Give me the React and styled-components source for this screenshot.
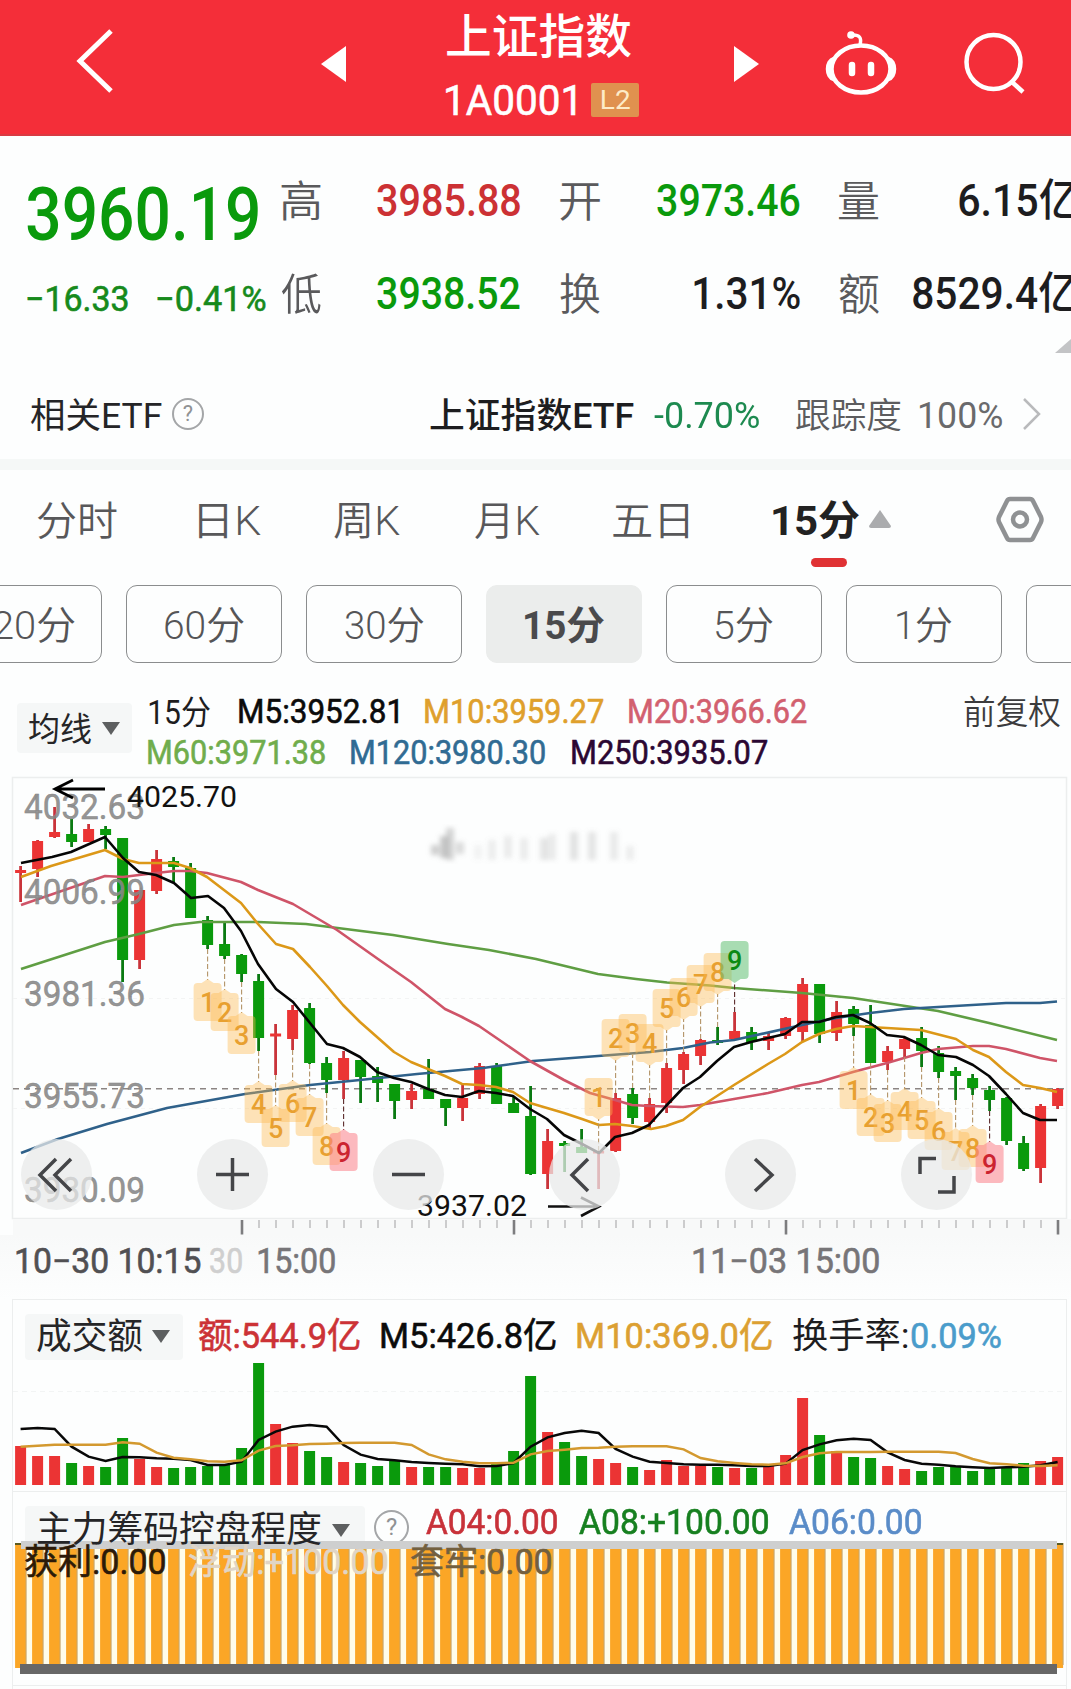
import React, { useLayoutEffect, useRef, useState } from 'react';
import styled, { createGlobalStyle } from 'styled-components';

const RED = '#eb3434';
const GREEN = '#0a9a0c';
const FONT = 'Roboto, "Noto Sans CJK SC", sans-serif';

const GlobalStyle = createGlobalStyle`
  body {
    margin: 0;
    background: #fdfefe;
    font-family: ${FONT};
  }
  * {
    box-sizing: border-box;
  }
`;

const Page = styled.div`
  width: 1071px;
  height: 1689px;
  overflow: hidden;
`;

// `heavy` sits between regular and medium, which Roboto has no cut for
const FitBox = styled.span`
  display: block;
  flex: none;
  width: ${p => p.$w}px;
  margin-left: ${p => p.$ml || 0}px;
  margin-top: ${p => p.$mt || 0}px;
  height: ${p => p.$size}px;
  line-height: ${p => p.$size}px;
  font-size: ${p => p.$size}px;
  font-weight: ${p => p.$weight || 400};
  color: ${p => p.$color || 'inherit'};
  -webkit-text-stroke: ${p => (p.$heavy ? 0.6 : 0)}px currentColor;
  white-space: nowrap;
`;

const FitInner = styled.span`
  display: inline-block;
  white-space: pre;
  transform-origin: 0 50%;
`;

// squeezes its text so that the drawn glyphs are exactly `w` wide
const Fit = ({ w, ml, mt, size, weight, heavy, color, children }) => {
  const ref = useRef(null);
  const [transform, setTransform] = useState('none');

  useLayoutEffect(() => {
    const ctx = document.createElement('canvas').getContext('2d');
    const cs = getComputedStyle(ref.current);
    ctx.font = `${cs.fontWeight} ${cs.fontSize} ${cs.fontFamily}`;
    const m = ctx.measureText(children);
    const scale = w / (m.actualBoundingBoxLeft + m.actualBoundingBoxRight);
    setTransform(
      `translateX(${m.actualBoundingBoxLeft * scale}px) scaleX(${scale})`
    );
  }, [children, w]);

  return (
    <FitBox
      $w={w}
      $ml={ml}
      $mt={mt}
      $size={size}
      $weight={weight}
      $heavy={heavy}
      $color={color}
    >
      <FitInner ref={ref} style={{ transform }}>
        {children}
      </FitInner>
    </FitBox>
  );
};

const Icon = styled.svg`
  display: block;
  flex: none;
  overflow: visible;
  margin-left: ${p => p.$ml || 0}px;
  margin-top: ${p => p.$mt || 0}px;
`;

/* ---------- header ---------- */

const Header = styled.header`
  display: flex;
  align-items: flex-start;
  height: 136px;
  background: #f42e39;
  border-bottom: 2px solid #d93a42;
  color: #fff;
`;

const TitleBlock = styled.div`
  width: 193px;
  margin-left: 100px;
`;

const CodeRow = styled.div`
  display: flex;
  align-items: center;
  height: 34px;
  margin-top: 23px;
`;

const Badge = styled.span`
  display: flex;
  align-items: center;
  width: 48px;
  height: 34px;
  margin-left: 16px;
  padding-left: 11px;
  border-radius: 2px;
  background: #e0914f;
`;

const TopBar = () => (
  <Header>
    <Icon $ml={77} $mt={30} width="36" height="62" fill="none" stroke="#fff" strokeWidth="5">
      <path d="M34 1 3 31 34 61" />
    </Icon>
    <Icon $ml={208} $mt={46} width="25" height="36">
      <path d="M25 0v36L0 18z" fill="#fff" />
    </Icon>
    <TitleBlock>
      <Fit w={184} size={47} mt={13} ml={1} weight={500}>上证指数</Fit>
      <CodeRow>
        <Fit w={129} size={42} mt={2} heavy>1A0001</Fit>
        <Badge>
          <Fit w={28} size={26} color="#fdebc8">L2</Fit>
        </Badge>
      </CodeRow>
    </TitleBlock>
    <Icon $ml={95} $mt={46} width="25" height="36">
      <path d="M0 0v36l25-18z" fill="#fff" />
    </Icon>
    <Icon $ml={67} $mt={30} width="70" height="64" fill="none" stroke="#fff" strokeWidth="4.500">
      <ellipse cx="35" cy="39" rx="29.500" ry="23.500" />
      <path d="M8 29C0 31 0 47 8 49M62 29c8 2 8 18 0 20" />
      <path d="M34 15c2-8-1-10-7-10" strokeWidth="3.500" />
      <circle cx="25" cy="5" r="3.800" fill="#fff" stroke="none" />
      <path d="M26 35v8M45 35v8" strokeWidth="6.500" strokeLinecap="round" />
    </Icon>
    <Icon $ml={69} $mt={33} width="60" height="60" fill="none" stroke="#fff" strokeWidth="4.500">
      <circle cx="28.500" cy="29" r="27" />
      <path d="m47 49 11 10" />
    </Icon>
  </Header>
);

/* ---------- quote ---------- */

const Quote = styled.section`
  display: flex;
  height: 217px;
`;

const PriceCol = styled.div`
  width: 281px;
  padding: 42px 0 0 27px;
`;

const Changes = styled.div`
  display: flex;
  margin-top: 30px;
`;

const Stats = styled.div`
  flex: 1;
  min-width: 0;
  display: grid;
  grid-template-columns: 279px 279px 240px;
  grid-template-rows: 93px 93px;
  padding-top: 18px;
`;

const Stat = styled.div`
  display: flex;
  align-items: center;
`;

const Corner = styled.div`
  align-self: flex-end;
  flex: none;
  width: 16px;
  height: 14px;
  margin-left: -16px;
  background: #c3c4c6;
  clip-path: polygon(100% 0, 100% 100%, 0 100%);
`;

const stats = [
  ['高', '3985.88', 55, 143, '#cc3134'],
  ['开', '3973.46', 56, 143, GREEN],
  ['量', '6.15亿', 79, 119, '#1d1d1f'],
  ['低', '3938.52', 55, 143, GREEN],
  ['换', '1.31%', 93, 106, '#1d1d1f'],
  ['额', '8529.4亿', 33, 164, '#1d1d1f'],
];

const QuotePanel = () => (
  <Quote>
    <PriceCol>
      <Fit w={231} size={74} weight={500} color={GREEN}>3960.19</Fit>
      <Changes>
        <Fit w={101} size={35} heavy color="#168a1c">−16.33</Fit>
        <Fit w={109} ml={29} size={35} heavy color="#168a1c">−0.41%</Fit>
      </Changes>
    </PriceCol>
    <Stats>
      {stats.map(([name, value, gap, w, color]) => (
        <Stat key={name}>
          <Fit w={40} mt={3} size={43} weight={350} color="#5a5a5c">{name}</Fit>
          <Fit w={w} ml={gap + 1} mt={1} size={44} weight={500} color={color}>{value}</Fit>
        </Stat>
      ))}
    </Stats>
    <Corner />
  </Quote>
);

/* ---------- related ETF ---------- */

const EtfRow = styled.section`
  display: flex;
  align-items: center;
  height: 117px;
  padding: 16px 0 0 31px;
  border-bottom: 11px solid #f5f8f7;
`;

const HelpMark = styled.span`
  display: flex;
  flex: none;
  align-items: center;
  justify-content: center;
  width: ${p => p.$d}px;
  height: ${p => p.$d}px;
  margin-left: ${p => p.$ml}px;
  margin-top: ${p => p.$mt || 0}px;
  border: 2px solid #a4a6a8;
  border-radius: 50%;
  color: #909294;
  font-size: ${p => p.$d * 0.68}px;
  line-height: 1;
`;

const Etf = () => (
  <EtfRow>
    <Fit w={131} mt={4} size={35} color="#252527">相关ETF</Fit>
    <HelpMark $d={32} $ml={10}>?</HelpMark>
    <Fit w={204} ml={226} mt={4} size={35} weight={500} color="#1d1d1f">上证指数ETF</Fit>
    <Fit w={105} ml={20} mt={4} size={36} color="#1d8a50">-0.70%</Fit>
    <Fit w={105} ml={37} mt={4} size={35} weight={350} color="#5c5c5e">跟踪度</Fit>
    <Fit w={82} ml={19} mt={4} size={36} color="#6a6a6c">100%</Fit>
    <Icon $ml={21} width="18" height="32" fill="none" stroke="#b9babc" strokeWidth="2.500">
      <path d="M1 1 16 16 1 31" />
    </Icon>
  </EtfRow>
);

/* ---------- period tabs ---------- */

const Tabs = styled.nav`
  display: flex;
  align-items: flex-start;
  height: 115px;
  padding-top: 31px;
  padding-left: 37px;
`;

const ActiveTab = styled.div`
  width: 86px;
  margin-left: 84px;
`;

const Underline = styled.div`
  width: 36px;
  height: 9px;
  margin: 16px 0 0 38px;
  border-radius: 5px;
  background: #e03234;
`;

const Periods = styled.div`
  display: flex;
  gap: 24px;
  height: 101px;
  margin-left: -54px;
`;

const Period = styled.div`
  display: flex;
  flex: none;
  align-items: center;
  justify-content: center;
  width: 156px;
  height: 78px;
  padding-top: 4px;
  border: 1.5px solid ${p => (p.$active ? '#ebedec' : '#8b8d8e')};
  border-radius: 11px;
  background: ${p => (p.$active ? '#ebedec' : 'transparent')};
`;

const periods = [
  ['120分', 102],
  ['60分', 79],
  ['30分', 79],
  ['15分', 79],
  ['5分', 57],
  ['1分', 55],
  ['', 10],
];

const PeriodTabs = () => (
  <>
    <Tabs>
      <Fit w={80} mt={1} size={40} weight={350} color="#58585a">分时</Fit>
      <Fit w={62} ml={82} mt={1} size={40} weight={350} color="#58585a">日K</Fit>
      <Fit w={66} ml={73} mt={1} size={40} weight={350} color="#58585a">周K</Fit>
      <Fit w={65} ml={75} mt={1} size={40} weight={350} color="#58585a">月K</Fit>
      <Fit w={76} ml={73} mt={1} size={40} weight={350} color="#58585a">五日</Fit>
      <ActiveTab>
        <Fit w={86} size={41} weight={700} color="#222">15分</Fit>
        <Underline />
      </ActiveTab>
      <Icon $ml={10} $mt={9} width="22" height="18">
        <path d="M11 0 22 16q0 2-2 2H2q-2 0-2-2z" fill="#abacae" />
      </Icon>
      <Icon $ml={105} $mt={-4} width="48" height="45" fill="none" stroke="#8f9193" strokeWidth="4.500">
        <path d="M14 2h20q2 0 3 2l8 16q1 2.500 0 5l-8 16q-1 2-3 2H14q-2 0-3-2L3 25q-1-2.500 0-5L11 4q1-2 3-2z" />
        <circle cx="24" cy="22.500" r="7" />
      </Icon>
    </Tabs>
    <Periods>
      {periods.map(([name, w]) => (
        <Period key={name} $active={name === '15分'}>
          {name && (
            <Fit
              w={w}
              size={39}
              weight={name === '15分' ? 700 : 350}
              color={name === '15分' ? '#4a4a4c' : '#555557'}
            >
              {name}
            </Fit>
          )}
        </Period>
      ))}
    </Periods>
  </>
);

/* ---------- indicator headings ---------- */

const Picker = styled.div`
  display: flex;
  flex: none;
  align-items: center;
  width: ${p => p.$w}px;
  height: ${p => p.$h}px;
  margin-left: ${p => p.$ml}px;
  padding-left: ${p => p.$pl}px;
  border-radius: 4px;
  background: #f5f7f7;
`;

const Caret = ({ ml }) => (
  <Icon $ml={ml} width="18" height="13">
    <path d="M0 0h18L9 13z" fill="#5d5f60" />
  </Icon>
);

const AverageHead = styled.div`
  display: flex;
  height: 90px;
  padding-top: 6px;
`;

const PickerWrap = styled.div`
  padding-top: 11px;
`;

const Averages = styled.div`
  width: 818px;
`;

const Line = styled.div`
  display: flex;
  align-items: center;
  height: 41px;
`;

const MainHead = () => (
  <AverageHead>
    <PickerWrap>
      <Picker $w={115} $h={50} $ml={17} $pl={12}>
        <Fit w={62} mt={3} size={33} color="#252527">均线</Fit>
        <Caret ml={11} />
      </Picker>
    </PickerWrap>
    <Averages>
      <Line>
        <Fit w={61} ml={17} size={33} color="#1d1d1f">15分</Fit>
        <Fit w={159} ml={29} size={32.5} heavy color="#0b0b0b">M5:3952.81</Fit>
        <Fit w={178} ml={27} size={32.5} heavy color="#dfa02c">M10:3959.27</Fit>
        <Fit w={178} ml={26} size={32.5} heavy color="#d2606f">M20:3966.62</Fit>
      </Line>
      <Line>
        <Fit w={177} ml={16} size={32.5} heavy color="#70ad4c">M60:3971.38</Fit>
        <Fit w={194} ml={26} size={32.5} heavy color="#306b93">M120:3980.30</Fit>
        <Fit w={195} ml={27} size={32.5} heavy color="#2b0732">M250:3935.07</Fit>
      </Line>
    </Averages>
    <Fit w={96} ml={14} mt={4} size={33} weight={350} color="#3b3b3d">前复权</Fit>
  </AverageHead>
);

/* ---------- charts ---------- */

const X0 = 20.6;
const STEP = 17;
const cx = i => X0 + i * STEP;

// colour, high, body top, body bottom, low
const candles = [
  ['r', 866, 870, 873, 902], ['r', 840, 841, 869, 877], ['r', 807, 832, 837, 838],
  ['g', 819, 834, 842, 847], ['r', 824, 829, 842, 842], ['g', 826, 829, 835, 849],
  ['g', 838, 838, 960, 982], ['r', 890, 890, 960, 969], ['r', 850, 859, 891, 894],
  ['g', 857, 861, 867, 882], ['g', 863, 868, 918, 918], ['g', 916, 920, 945, 949],
  ['g', 923, 944, 956, 959], ['g', 954, 955, 974, 982], ['g', 974, 981, 1038, 1051],
  ['r', 1024, 1033.5, 1036.5, 1075], ['r', 1005, 1010, 1039, 1050], ['g', 1003, 1008, 1063, 1064],
  ['g', 1057, 1063, 1080, 1093], ['r', 1051, 1058, 1080, 1099], ['g', 1060, 1060, 1077, 1103],
  ['g', 1067, 1076, 1083, 1102], ['g', 1084, 1084, 1101, 1119], ['r', 1084, 1091, 1100, 1109],
  ['g', 1059, 1089, 1099, 1099], ['g', 1099, 1099, 1108, 1126], ['r', 1083, 1098, 1108, 1121],
  ['r', 1063, 1066, 1094, 1099], ['g', 1063, 1066, 1104, 1104], ['g', 1097, 1103, 1113, 1113],
  ['g', 1086, 1116, 1174, 1175], ['r', 1129, 1141, 1174, 1189], ['g', 1141, 1143, 1146, 1172],
  ['g', 1129, 1147, 1153, 1153], ['r', 1151, 1151, 1153.5, 1189], ['r', 1093, 1098, 1151, 1152],
  ['g', 1088, 1094, 1118, 1124], ['r', 1098, 1104, 1122, 1128], ['r', 1063, 1068, 1103, 1113],
  ['r', 1052, 1054, 1070, 1084], ['r', 1039, 1040, 1056, 1065], ['g', 1027, 1040, 1043, 1045],
  ['r', 1012, 1031, 1039, 1039], ['g', 1027, 1032, 1042, 1050], ['r', 1032, 1036, 1041, 1050],
  ['r', 1017, 1018, 1036, 1039], ['r', 978, 984, 1032, 1042], ['g', 984, 984, 1034, 1043],
  ['r', 1001, 1012, 1033, 1041], ['g', 1006, 1009, 1024, 1036], ['g', 1005, 1025, 1063, 1063],
  ['r', 1046, 1051, 1062, 1070], ['r', 1038, 1039, 1049, 1057], ['g', 1027, 1038, 1051, 1067],
  ['g', 1046, 1053, 1072, 1078], ['g', 1067, 1071, 1076, 1100], ['g', 1074, 1078, 1088, 1095],
  ['g', 1086, 1090, 1100, 1111], ['g', 1097, 1098, 1141, 1145], ['g', 1136, 1143, 1169, 1171],
  ['r', 1104, 1106, 1168, 1183], ['r', 1088, 1089, 1106, 1109],
];

const averages = [
  ['#5f9e43', '21,969 105,942 139,934 174,925 200,922 258,922 306,924 393,935 448,944 489,950 536,959 598,974 636,979 667,982.5 710,985.5 734,988 802,993 853,998 938,1011 989,1023 1057,1040'],
  ['#2f618a', '21,1153 58,1139 107,1124 167,1108 245,1094 310,1085 360,1080 417,1074 483,1068 533,1061 598,1056 650,1052 683,1048 710,1042.500 734,1040 802,1025 836,1018 870,1013 904,1009 938,1007 1006,1003 1040,1003 1057,1001.500'],
  ['#cf5468', '21,905 105,876 123,877 139,875 174,871 190,871 207,873 241,882 258,890 293,904 337,930 378,959 411,982 445,1009 462,1017 479,1026 530,1061 564,1080 590,1093 615,1100 632,1105 649,1106 683,1107 700,1105 734,1099 768,1093 802,1085 819,1082 853,1072 887,1063 921,1053 938,1049 973,1046 989,1046 1006,1049 1040,1058 1057,1061'],
  ['#dc9818', '21,877 51,866 105,850 123,859 139,863 174,863 190,868 207,877 224,890 241,903 258,924 276,944 293,949 310,967 327,986 343,1005 360,1022 394,1052 411,1062 428,1069 445,1076 462,1084 479,1085 496,1087 513,1092 530,1103 547,1108 564,1113 582,1119 599,1125 615,1124 632,1126 651,1129 666,1126 683,1120 700,1107 734,1085 768,1064 785,1054 802,1042 819,1034 836,1029 853,1026 870,1027 904,1029 921,1030 956,1039 973,1050 989,1057 1006,1072 1023,1085 1040,1088 1057,1092'],
  ['#050505', '21,863 52,857 71,852 105,837 123,858 139,872 156,875 174,883 191,898 208,896 224,908 241,931 258,964 276,989 293,1002 310,1023 327,1044 343,1048 360,1057 377,1072 394,1078 411,1082 428,1089 445,1095 462,1097 479,1091 496,1093 513,1096 530,1109 547,1119 564,1135 582,1144 599,1153 615,1137 632,1133 649,1125 666,1106 683,1088 700,1077 717,1061 734,1047 751,1042 768,1038 785,1034 802,1022 819,1022 836,1017 853,1015 870,1023 887,1035 904,1037 921,1045 938,1055 956,1057 973,1065 989,1076 1006,1094 1023,1113 1040,1120 1057,1120'],
];

// candle index, digit, text centre, true when the tag hangs below its candle
const tags = [
  [11, 1, 1002, true], [12, 2, 1012, true], [13, 3, 1035, true], [14, 4, 1104, true],
  [15, 5, 1128, true], [16, 6, 1103, true], [17, 7, 1117, true], [18, 8, 1146, true],
  [19, 9, 1152, true],
  [34, 1, 1097, false], [35, 2, 1038, false], [36, 3, 1033, false], [37, 4, 1043, false],
  [38, 5, 1008, false], [39, 6, 997, false], [40, 7, 984, false], [41, 8, 972, false],
  [42, 9, 960, false],
  [49, 1, 1090, true], [50, 2, 1117, true], [51, 3, 1123, true], [52, 4, 1111, true],
  [53, 5, 1120, true], [54, 6, 1131, true], [55, 7, 1151, true], [56, 8, 1148, true],
  [57, 9, 1164, true],
];

const priceLabels = [
  ['4032.63', 819],
  ['4006.99', 904],
  ['3981.36', 1006],
  ['3955.73', 1108],
  ['3930.09', 1202],
];

const Svg = styled.svg`
  display: block;
  font-family: ${FONT};
`;

const tagColors = (n, below) => {
  if (n !== 9) return ['#fcb84e', '#e8a030'];
  return below ? ['#fb7f88', '#cc2430'] : ['#63c073', '#0b8a12'];
};

const Tag = ({ i, n, y, below }) => {
  const x = cx(i);
  const s = below ? 1 : -1;
  const [fill, ink] = tagColors(n, below);
  const end = below ? candles[i][4] : candles[i][1];
  return (
    <g>
      <line
        x1={x} x2={x} y1={end} y2={y - s * 22}
        stroke={n === 9 ? '#5b2a2a' : '#b39468'} strokeWidth="1.100" strokeDasharray="5 2.500"
      />
      <path
        transform={`translate(${x} ${y}) scale(1 ${s})`}
        d="M0-23 6-19H10Q14-19 14-15V15Q14 19 10 19H-10Q-14 19-14 15V-15Q-14-19-10-19H-6Z"
        fill={fill} fillOpacity={n === 9 ? 0.55 : 0.4}
      />
      <text x={x} y={y + 9.5} fontSize="27" fontWeight="500" textAnchor="middle" fill={ink}>
        {n}
      </text>
    </g>
  );
};

const Candle = ({ i, data: [c, high, top, bottom, low] }) => (
  <g fill={c === 'r' ? RED : GREEN}>
    <rect
      x={cx(i) - 1.4} y={high} width="2.800" height={low - high}
      fill={c === 'r' ? '#c9343a' : '#0a7a12'}
    />
    <rect x={cx(i) - 5.5} y={top} width="11" height={bottom - top} />
  </g>
);

const ChartBox = styled.section`
  position: relative;
`;

const Controls = styled.div`
  position: absolute;
  left: 21px;
  top: 363px;
  display: flex;
  gap: 105px;
`;

const Round = styled.span`
  display: block;
  width: 71px;
  height: 71px;
  border-radius: 50%;
  background: rgba(232, 234, 234, 0.74);
`;

const controls = [
  'M35 20 19 36l16 16M50 20 34 36l16 16',
  'M35.500 19v33M19 35.500h33',
  'M19 35.500h33',
  'M39 20 23 36l16 16',
  'M30 20l17 16-17 16',
  'M19 35V19.500h16M53 37v16H37',
];

// x, top, height, opacity
const smudges = [
  [431, 845, 10, 0.4], [440, 836, 22, 0.45], [446, 828, 32, 0.35], [456, 842, 12, 0.3],
  [474, 845, 14, 0.1], [488, 840, 20, 0.14], [504, 836, 22, 0.16], [520, 838, 22, 0.15],
  [540, 838, 22, 0.22], [548, 834, 26, 0.16], [570, 832, 28, 0.24], [588, 832, 28, 0.22],
  [610, 832, 28, 0.18], [626, 846, 14, 0.14],
];

const MainChart = () => (
  <ChartBox>
    <Svg width="1071" height="459" viewBox="0 776 1071 459">
      <defs>
        <filter id="soft">
          <feGaussianBlur stdDeviation="2.500" />
        </filter>
      </defs>
      <rect x="12.500" y="777.500" width="1054" height="441" fill="none" stroke="#eceeee" strokeWidth="1.500" />
      <rect x="13" y="1219" width="1058" height="16" fill="#f8f9f9" />
      <g filter="url(#soft)">
        {smudges.map(([x, y, h, o]) => (
          <rect key={x} x={x} y={y} width="8" height={h} fill="#888" opacity={o} />
        ))}
      </g>
      <path d="M13 998.500H1066M13 1108.500H1066" stroke="#f3f4f4" strokeDasharray="4 4" />
      <path d="M13 1088.700H1066" stroke="#8c8583" strokeWidth="1.600" strokeDasharray="6 5" />
      {candles.map((c, i) => (
        <Candle key={i} i={i} data={c} />
      ))}
      {averages.map(([stroke, points]) => (
        <polyline key={stroke} points={points} fill="none" stroke={stroke} strokeWidth="2.600" strokeLinejoin="round" />
      ))}
      {tags.map(([i, n, y, below]) => (
        <Tag key={i} i={i} n={n} y={y} below={below} />
      ))}
      {priceLabels.map(([label, y]) => (
        <text
          key={label} x="24" y={y} fontSize="35" fill="#878787" fillOpacity="0.900"
          stroke="#878787" strokeWidth="0.500"
          textLength="121" lengthAdjust="spacingAndGlyphs"
        >
          {label}
        </text>
      ))}
      <text x="127" y="807" fontSize="29.500" fill="#111" textLength="110" lengthAdjust="spacingAndGlyphs">
        4025.70
      </text>
      <path d="M105 789H56M73 780 55 789l18 9" fill="none" stroke="#000" strokeWidth="2.800" />
      <text x="417" y="1216" fontSize="29.500" fill="#111" textLength="110" lengthAdjust="spacingAndGlyphs">
        3937.02
      </text>
      <path d="M548 1206.500h49M581 1197.500l18 9-18 9.500" fill="none" stroke="#111" strokeWidth="2.600" />
      {candles.slice(13).map((c, k) => (
        <line
          key={k} x1={cx(k + 13) + 0.4} x2={cx(k + 13) + 0.4} y1="1220" y2={k % 16 ? 1228 : 1234.5}
          stroke={k % 16 ? '#b4b4b5' : '#7d7d7f'} strokeWidth={k % 16 ? 1.3 : 2.6}
        />
      ))}
    </Svg>
    <Controls>
      {controls.map(d => (
        <Round key={d}>
          <Icon width="71" height="71" fill="none" stroke="#444548" strokeWidth="3.500">
            <path d={d} />
          </Icon>
        </Round>
      ))}
    </Controls>
  </ChartBox>
);

const TimeAxis = styled.div`
  display: flex;
  height: 64px;
  padding: 9px 0 0 16px;
  background: linear-gradient(#f8f9f9, #fdfefe);
`;

const Times = () => (
  <TimeAxis>
    <Fit w={185} size={34.5} heavy color="#515053">10−30 10:15</Fit>
    <Fit w={32} ml={9} size={34.5} heavy color="#cfcfcf">30</Fit>
    <Fit w={77} ml={16} size={34.5} heavy color="#777578">15:00</Fit>
    <Fit w={186} ml={358} size={34.5} heavy color="#777578">11−03 15:00</Fit>
  </TimeAxis>
);

const Panel = styled.section`
  position: relative;
  height: ${p => p.$h}px;
  margin: 0 4px 0 12px;
  border: solid #eceeee;
  border-width: 1px 1px 0;
`;

// colour and the top edge of each bar
const volumes = (
  'r1446 r1456 r1456 g1463 r1466 g1467 g1438 r1459 r1467 g1468 g1467 g1466 g1464 g1448 g1363 r1424 ' +
  'r1443 g1451 g1457 r1462 g1463 g1466 g1460 r1467 g1467 g1467 r1468 r1468 g1463 g1451 g1376 r1432 ' +
  'g1442 g1456 r1459 r1463 g1467 r1470 r1460 r1466 r1466 g1467 r1468 g1468 r1465 r1455 r1398 g1435 ' +
  'r1451 g1457 g1458 r1466 r1469 g1471 g1467 g1467 g1471 g1469 g1468 g1463 r1461 r1457'
).split(' ');

const volume5 = [
  447, 444, 447, 500, 530, 543, 531, 532, 535, 536, 540, 555, 555, 545, 480, 455, 440, 435, 440,
  495, 524, 537, 541, 546, 549, 551, 553, 559, 558, 549, 500, 472, 459, 452, 459, 507, 530, 545,
  549, 553, 554, 554, 556, 558, 558, 551, 510, 493, 481, 476, 480, 517, 540, 551, 554, 559, 562,
  564, 562, 560, 556, 546,
];

const volume10 = [
  500, 497, 494, 494, 494, 494, 487, 491, 518, 533, 538, 544, 545, 541, 512, 498, 496, 492, 491,
  489, 488, 488, 488, 495, 523, 538, 545, 550, 550, 548, 523, 513, 509, 504, 503, 500, 499, 499,
  499, 508, 534, 544, 549, 553, 554, 550, 531, 520, 516, 516, 516, 515, 515, 515, 515, 519, 537,
  550, 553, 557, 558, 556,
];

const toPoints = list => list.map((v, i) => `${cx(i)},${1280 + v / 3}`).join(' ');

const VolumeHead = styled.div`
  display: flex;
  align-items: center;
  height: 62px;
  padding-top: 11px;
`;

const VolumePanel = () => (
  <Panel $h={192}>
    <VolumeHead>
      <Picker $w={158} $h={46} $ml={12} $pl={12}>
        <Fit w={105} size={36} color="#252527">成交额</Fit>
        <Caret ml={10} />
      </Picker>
      <Fit w={161} ml={16} size={35.5} heavy color="#cc3236">额:544.9亿</Fit>
      <Fit w={175} ml={21} size={35.5} heavy color="#0b0b0b">M5:426.8亿</Fit>
      <Fit w={195} ml={21} size={35.5} heavy color="#dca032">M10:369.0亿</Fit>
      <Fit w={115} ml={21} size={35.5} color="#1d1d1f">换手率:</Fit>
      <Fit w={89} ml={4} size={35.5} heavy color="#4a9ccb">0.09%</Fit>
    </VolumeHead>
    <Svg width="1054" height="124" viewBox="13 1362 1054 124">
      <path d="M13 1391.500H1066" stroke="#f2f4f4" strokeDasharray="5 4" />
      {volumes.map((v, i) => {
        const top = Number(v.slice(1));
        return (
          <rect
            key={i} x={cx(i) - 5.5} y={top} width="11" height={1485 - top}
            fill={v[0] === 'r' ? RED : GREEN}
          />
        );
      })}
      <polyline points={toPoints(volume5)} fill="none" stroke="#080808" strokeWidth="2.500" />
      <polyline points={toPoints(volume10)} fill="none" stroke="#d3992f" strokeWidth="2.500" />
    </Svg>
  </Panel>
);

const ChipHead = styled.div`
  display: flex;
  height: 49px;
  padding-top: 14px;
`;

const ChipValues = styled.div`
  position: absolute;
  left: 12px;
  top: 53px;
  display: flex;
`;

const ChipPanel = () => (
  <Panel $h={194}>
    <ChipHead>
      <Picker $w={340} $h={48} $ml={12} $pl={13}>
        <Fit w={283} size={36} color="#252527">主力筹码控盘程度</Fit>
        <Caret ml={11} />
      </Picker>
      <HelpMark $d={35} $ml={9} $mt={4}>?</HelpMark>
      <Fit w={131} ml={17} mt={-1} size={35} heavy color="#c8323a">A04:0.00</Fit>
      <Fit w={189} ml={22} mt={-1} size={35} heavy color="#178020">A08:+100.00</Fit>
      <Fit w={132} ml={21} mt={-1} size={35} heavy color="#5a8cc8">A06:0.00</Fit>
    </ChipHead>
    <Svg width="1054" height="135" viewBox="13 1541 1054 135">
      {candles.map((c, i) => (
        <g key={i}>
          <rect x={cx(i) - 5.5} y="1543" width="17" height="122" fill={i < 61 ? '#fffdea' : 'none'} />
          <rect x={cx(i) - 5.5} y="1543" width="11" height="125" fill="#fba626" />
          <rect x={cx(i) + 5} y="1543" width="1" height="122" fill="#c3a874" />
        </g>
      ))}
      <rect x="15" y="1543" width="6" height="2" fill="#5b5a20" />
      <rect x="1057" y="1543" width="6" height="2" fill="#5b5a20" />
      <rect x="21" y="1541" width="1036" height="8" fill="#cecfcf" />
      <rect x="20" y="1664" width="1037" height="10" fill="#676767" />
    </Svg>
    <ChipValues>
      <Fit w={140} size={35} heavy color="#2c1a08">获利:0.00</Fit>
      <Fit w={198} ml={24} size={35} heavy color="#e0d5c6">浮动:+100.00</Fit>
      <Fit w={140} ml={24} size={35} heavy color="#73603f">套牢:0.00</Fit>
    </ChipValues>
  </Panel>
);

const Footer = styled.div`
  height: 5px;
  margin: 0 4px 0 12px;
  border: solid #eceeee;
  border-width: 1px 1px 0;
`;

const App = () => (
  <Page>
    <GlobalStyle />
    <TopBar />
    <QuotePanel />
    <Etf />
    <PeriodTabs />
    <MainHead />
    <MainChart />
    <Times />
    <VolumePanel />
    <ChipPanel />
    <Footer />
  </Page>
);

export default App;
